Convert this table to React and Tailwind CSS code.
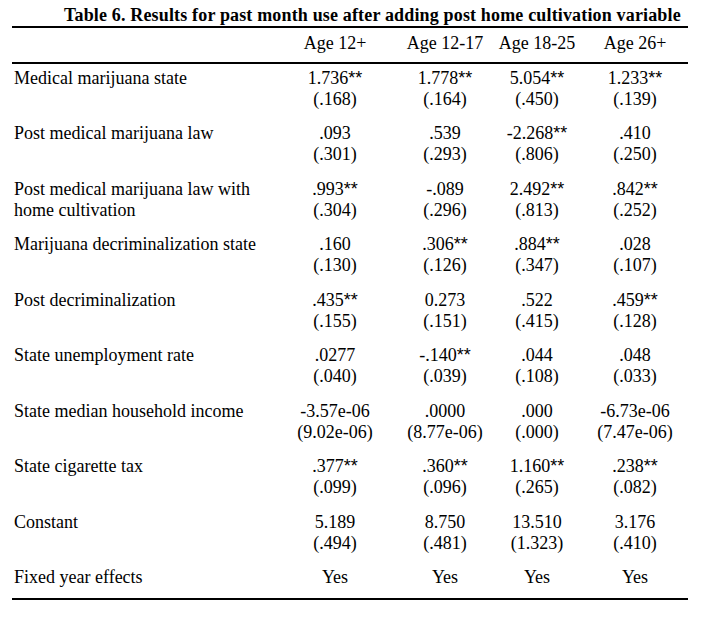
import React from 'react';

const rows = [
  { label: ['Medical marijuana state'], vals: [['1.736**', '(.168)'], ['1.778**', '(.164)'], ['5.054**', '(.450)'], ['1.233**', '(.139)']] },
  { label: ['Post medical marijuana law'], vals: [['.093', '(.301)'], ['.539', '(.293)'], ['-2.268**', '(.806)'], ['.410', '(.250)']] },
  { label: ['Post medical marijuana law with', 'home cultivation'], vals: [['.993**', '(.304)'], ['-.089', '(.296)'], ['2.492**', '(.813)'], ['.842**', '(.252)']] },
  { label: ['Marijuana decriminalization state'], vals: [['.160', '(.130)'], ['.306**', '(.126)'], ['.884**', '(.347)'], ['.028', '(.107)']] },
  { label: ['Post decriminalization'], vals: [['.435**', '(.155)'], ['0.273', '(.151)'], ['.522', '(.415)'], ['.459**', '(.128)']] },
  { label: ['State unemployment rate'], vals: [['.0277', '(.040)'], ['-.140**', '(.039)'], ['.044', '(.108)'], ['.048', '(.033)']] },
  { label: ['State median household income'], vals: [['-3.57e-06', '(9.02e-06)'], ['.0000', '(8.77e-06)'], ['.000', '(.000)'], ['-6.73e-06', '(7.47e-06)']] },
  { label: ['State cigarette tax'], vals: [['.377**', '(.099)'], ['.360**', '(.096)'], ['1.160**', '(.265)'], ['.238**', '(.082)']] },
  { label: ['Constant'], vals: [['5.189', '(.494)'], ['8.750', '(.481)'], ['13.510', '(1.323)'], ['3.176', '(.410)']] },
];

const heads = ['Age 12+', 'Age 12-17', 'Age 18-25', 'Age 26+'];

// coefficient text, with the significance stars set in a sans face like the PDF
function Coef({ text }) {
  if (!text.endsWith('**')) return <span>{text}</span>;
  return (
    <span>
      {text.slice(0, -2)}
      <span className="font-['Liberation_Sans',sans-serif] text-[18px]">**</span>
    </span>
  );
}

const gridCols = 'grid grid-cols-[268px_110px_110px_74px_122px]';

export default function App() {
  return (
    <div className="w-[702px] h-[632px] bg-white text-black font-['Liberation_Serif',serif] text-[18px] leading-[21px]">
      <div className="pl-[12px] pt-[4px]">
        <h1 className="pl-[52px] font-bold leading-[22px] tracking-[0.16px] whitespace-nowrap">
          Table 6. Results for past month use after adding post home cultivation variable
        </h1>
        <div className="w-[676px] border-t-2 border-b-2 border-black">
          <div className={`${gridCols} pt-[5px] pb-[8px]`}>
            <div />
            {heads.map((h) => (
              <div key={h} className="flex justify-center whitespace-nowrap">{h}</div>
            ))}
          </div>
        </div>
        <div className="w-[676px] border-b-2 border-black pt-[3.5px] pb-[10px]">
          {rows.map((r, i) => (
            <div key={i} className={`${gridCols} pb-[13.5px]`}>
              <div className="pl-[2px] whitespace-nowrap">
                {r.label.map((l) => (
                  <div key={l}>{l}</div>
                ))}
              </div>
              {r.vals.map((v, j) => (
                <div key={j} className="flex flex-col items-center whitespace-nowrap">
                  <Coef text={v[0]} />
                  <span>{v[1]}</span>
                </div>
              ))}
            </div>
          ))}
          <div className={gridCols}>
            <div className="pl-[2px]">Fixed year effects</div>
            {heads.map((h) => (
              <div key={h} className="flex justify-center">Yes</div>
            ))}
          </div>
        </div>
      </div>
    </div>
  );
}
